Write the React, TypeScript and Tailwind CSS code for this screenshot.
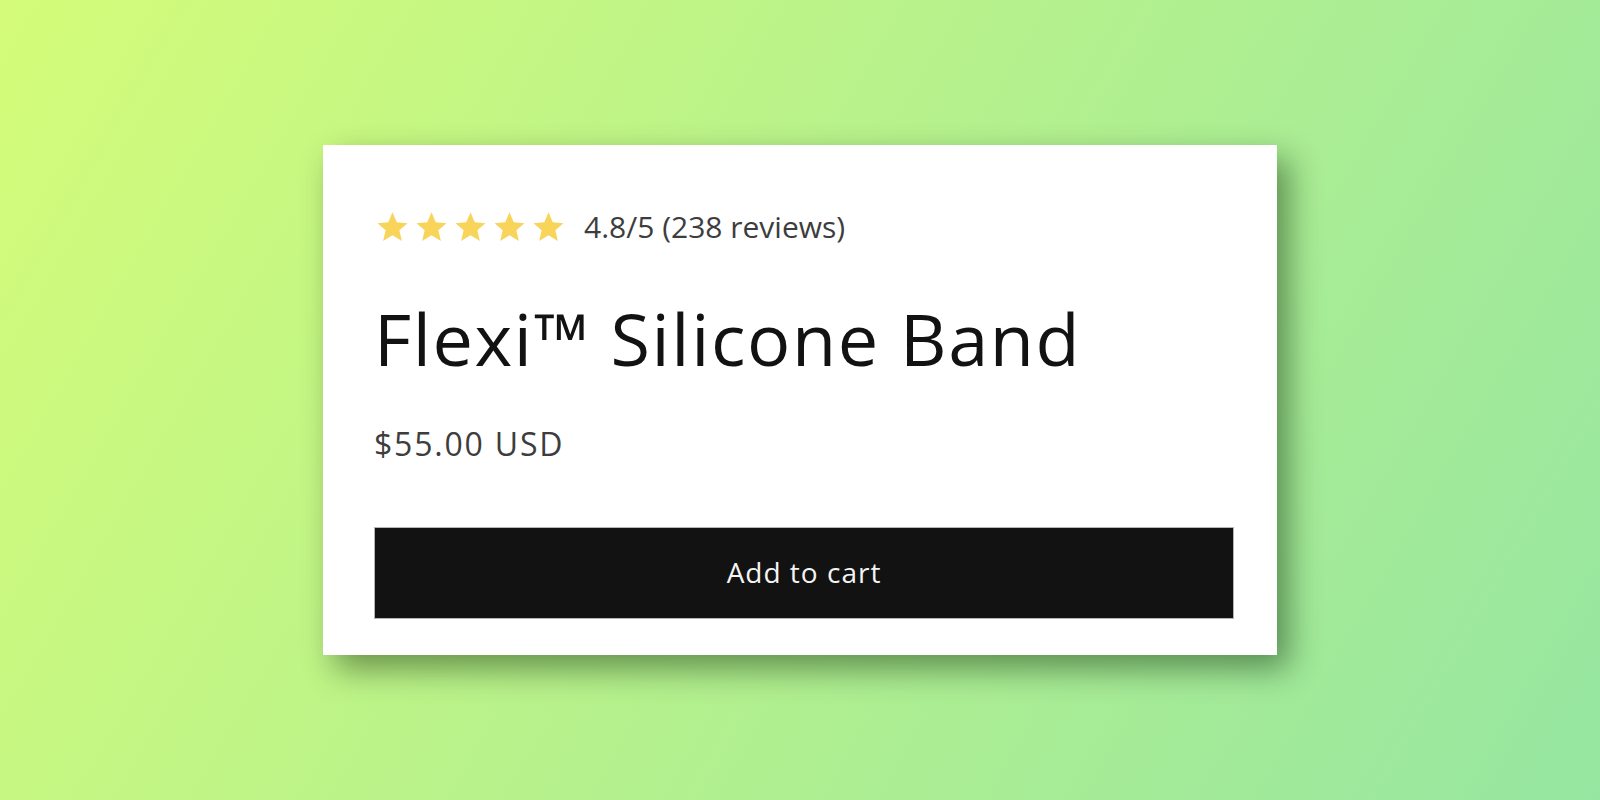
import React from 'react';

const Star = () => (
  <svg width="33" height="32" viewBox="0 0 24 23" className="shrink-0">
    <path
      d="M12 0.8l3.1 7.2 7.8 0.7-5.9 5.2 1.8 7.7L12 17.5l-6.8 4.1 1.8-7.7-5.9-5.2 7.8-0.7z"
      fill="#f8d45a"
    />
  </svg>
);

const ProductCard: React.FC = () => {
  return (
    <div className="w-[954px] h-[510px] bg-white shadow-[12px_14px_30px_rgba(0,30,0,0.45)] pl-[51px] pr-[43px] pt-[66px] flex flex-col">
      <div className="flex items-center h-8">
        <div className="flex items-center gap-[6px] ml-[2px]">
          {[0, 1, 2, 3, 4].map((i) => (
            <Star key={i} />
          ))}
        </div>
        <span className="ml-[19px] text-[30px] leading-none text-[#3d3d3d]">4.8/5 (238 reviews)</span>
      </div>
      <h1 className="mt-[59px] text-[72px] leading-none text-[#121212] tracking-[1.6px] font-normal">
        Flexi™ Silicone Band
      </h1>
      <div className="mt-[54px] text-[32px] leading-none text-[#3d3d3d] tracking-[1.8px]">$55.00 USD</div>
      <button className="mt-[67px] w-full h-[92px] pb-[3px] bg-[#121212] border border-[#b5b5b5] text-[#f4f4f4] text-[28px] tracking-[1px] leading-none">
        Add to cart
      </button>
    </div>
  );
};

export default function App() {
  return (
    <div
      className="w-full h-screen flex items-center justify-center bg-[linear-gradient(120deg,#d4fc79,#96e6a1)]"
      style={{ fontFamily: '"Open Sans", "Noto Sans", sans-serif' }}
    >
      <ProductCard />
    </div>
  );
}
